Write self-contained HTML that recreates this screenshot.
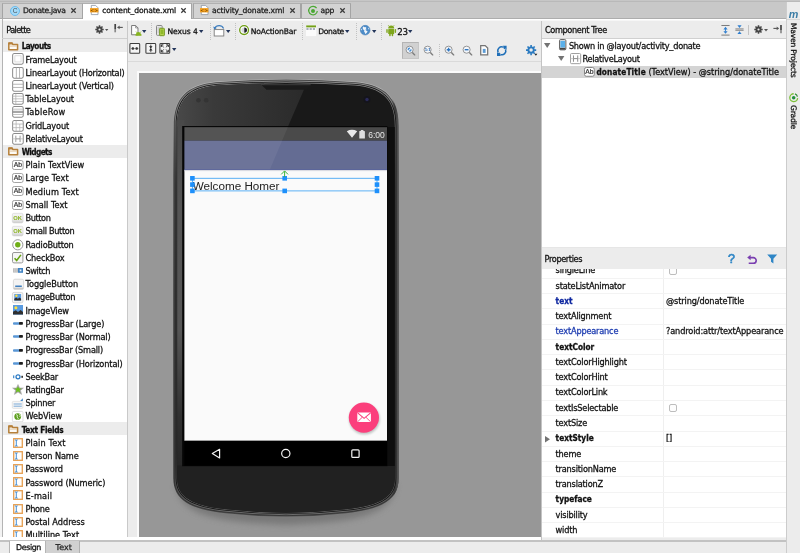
<!DOCTYPE html>
<html><head><meta charset="utf-8"><title>content_donate.xml</title>
<style>
*{margin:0;padding:0;box-sizing:border-box}
html,body{width:800px;height:553px;overflow:hidden;background:#ececec;font-family:"DejaVu Sans","Liberation Sans",sans-serif;font-size:7.8px;color:#1a1a1a}
.a{position:absolute}
.t{position:absolute;white-space:nowrap;line-height:10px;height:10px;margin-top:0.1px;-webkit-text-stroke:0.27px currentColor}
#root{position:absolute;left:0;top:0;width:800px;height:553px;overflow:hidden;will-change:transform}
.b,b{font-weight:bold;font-family:"DejaVu Sans Condensed","DejaVu Sans",sans-serif}
svg{position:absolute;overflow:visible}
</style></head>
<body>
<div id="root">
<div class="a" style="left:0px;top:0px;width:800px;height:19px;background:#c8c8c8;"></div>
<div class="a" style="left:0px;top:0px;width:800px;height:2.4px;background:#b9b9b9;"></div>
<div class="a" style="left:0px;top:0px;width:800px;height:0.8px;background:#c6c6c6;"></div>
<div class="a" style="left:0px;top:17.8px;width:800px;height:1px;background:#adadad;"></div>
<div class="a" style="left:0px;top:18.7px;width:800px;height:1.7px;background:#ffffff;"></div>
<div class="a" style="left:0px;top:20.4px;width:800px;height:1px;background:#f6f6f6;"></div>
<div class="a" style="left:2px;top:2.6px;width:80.5px;height:15.4px;background:#d3d3d3;border-left:1px solid #a4a4a4;border-right:1px solid #a4a4a4;border-top:0.6px solid #b0b0b0;"></div>
<div class="a" style="left:81.8px;top:2.6px;width:110.2px;height:16.4px;background:#ffffff;border-left:1px solid #a4a4a4;border-right:1px solid #a4a4a4;border-top:0.6px solid #b0b0b0;"></div>
<div class="a" style="left:192.5px;top:2.6px;width:108.19999999999999px;height:15.4px;background:#d3d3d3;border-left:1px solid #a4a4a4;border-right:1px solid #a4a4a4;border-top:0.6px solid #b0b0b0;"></div>
<div class="a" style="left:301px;top:2.6px;width:49.80000000000001px;height:15.4px;background:#d3d3d3;border-left:1px solid #a4a4a4;border-right:1px solid #a4a4a4;border-top:0.6px solid #b0b0b0;"></div>
<div class="t " style="left:23px;top:5.80px;font-size:7.6px;letter-spacing:-0.3px;color:#222;">Donate.java</div>
<div class="t " style="left:102.2px;top:5.80px;font-size:7.6px;letter-spacing:-0.11px;color:#111;">content_donate.xml</div>
<div class="t " style="left:212px;top:5.80px;font-size:7.6px;letter-spacing:-0.14px;color:#222;">activity_donate.xml</div>
<div class="t " style="left:320.5px;top:5.80px;font-size:7.6px;letter-spacing:-0.27px;color:#222;">app</div>
<svg style="left:71.0px;top:8.3px" width="5" height="5" viewBox="0 0 5 5"><path d="M0.3 0.3L4.7 4.7M4.7 0.3L0.3 4.7" stroke="#3a3a3a" stroke-width="1.25" fill="none"/></svg>
<svg style="left:181.3px;top:8.3px" width="5" height="5" viewBox="0 0 5 5"><path d="M0.3 0.3L4.7 4.7M4.7 0.3L0.3 4.7" stroke="#3a3a3a" stroke-width="1.25" fill="none"/></svg>
<svg style="left:290.0px;top:8.3px" width="5" height="5" viewBox="0 0 5 5"><path d="M0.3 0.3L4.7 4.7M4.7 0.3L0.3 4.7" stroke="#3a3a3a" stroke-width="1.25" fill="none"/></svg>
<svg style="left:339.5px;top:8.3px" width="5" height="5" viewBox="0 0 5 5"><path d="M0.3 0.3L4.7 4.7M4.7 0.3L0.3 4.7" stroke="#3a3a3a" stroke-width="1.25" fill="none"/></svg>
<svg style="left:10.1px;top:5.5px" width="10" height="10" viewBox="0 0 10 10"><circle cx="5" cy="5" r="4.5" fill="#a3daf8" stroke="#62b8ec" stroke-width="0.9"/><text x="5.05" y="7.35" font-size="6.6" text-anchor="middle" fill="#4c5258" font-family='"Liberation Sans",sans-serif'>C</text></svg>
<svg style="left:90.2px;top:5.2px" width="9" height="10" viewBox="0 0 9 10"><path d="M1.3 0.4H5.6L8 2.8V9.6H1.3Z" fill="#fff" stroke="#8a93a0" stroke-width="0.8"/><rect x="0" y="3.1" width="8.4" height="4.3" fill="#f5a01e"/><text x="4.2" y="6.8" font-size="4.6" text-anchor="middle" fill="#7a4a00" font-weight="bold" font-family='"DejaVu Sans",sans-serif'>&lt;&gt;</text></svg>
<svg style="left:200.3px;top:5.2px" width="9" height="10" viewBox="0 0 9 10"><path d="M1.3 0.4H5.6L8 2.8V9.6H1.3Z" fill="#fff" stroke="#8a93a0" stroke-width="0.8"/><rect x="0" y="3.1" width="8.4" height="4.3" fill="#f5a01e"/><text x="4.2" y="6.8" font-size="4.6" text-anchor="middle" fill="#7a4a00" font-weight="bold" font-family='"DejaVu Sans",sans-serif'>&lt;&gt;</text></svg>
<svg style="left:307.6px;top:5.7px" width="10" height="10" viewBox="0 0 10 10"><path d="M8.6 2.2A4.3 4.3 0 1 0 9.3 5" fill="none" stroke="#4aa832" stroke-width="1.2"/><circle cx="5" cy="5" r="2" fill="#4aa832"/></svg>
<div class="a" style="left:0px;top:21.3px;width:128px;height:520px;background:#ececec;"></div>
<div class="a" style="left:82.8px;top:17px;width:108.4px;height:2px;background:#ffffff;"></div>
<div class="a" style="left:2.4px;top:38.6px;width:124.4px;height:499px;background:#ffffff;"></div>
<div class="a" style="left:0px;top:20.4px;width:2px;height:533px;background:#f3f3f3;"></div>
<div class="a" style="left:1.9px;top:19px;width:0.8px;height:534px;background:#b4b4b4;"></div>
<div class="a" style="left:2.4px;top:38.2px;width:125px;height:0.7px;background:#cfcfcf;"></div>
<div class="a" style="left:127px;top:21.3px;width:0.9px;height:517px;background:#c9c9c9;"></div>
<div class="t " style="left:6.2px;top:25.40px;font-size:8.2px;letter-spacing:-0.62px;color:#111;">Palette</div>
<svg style="left:94.8px;top:24.5px" width="9" height="9" viewBox="0 0 9 9"><circle cx="4.5" cy="4.5" r="2.05" fill="none" stroke="#454545" stroke-width="1.9"/><g stroke="#454545" stroke-width="1.55"><path d="M4.5 0.3V2M4.5 7V8.7M0.3 4.5H2M7 4.5H8.7M1.5 1.5L2.7 2.7M6.3 6.3L7.5 7.5M7.5 1.5L6.3 2.7M2.7 6.3L1.5 7.5"/></g></svg>
<svg style="left:104.8px;top:28.5px" width="3.4" height="2.6" viewBox="0 0 4 3"><path d="M0 0H4L2 2.4Z" fill="#555"/></svg>
<svg style="left:113.6px;top:24.4px" width="10" height="9" viewBox="0 0 10 9"><path d="M1.2 0V5" stroke="#444" stroke-width="1.7"/><path d="M1.2 5V8.3" stroke="#8a8a8a" stroke-width="1.7"/><path d="M3.6 3.4H8.8" stroke="#555" stroke-width="1.1"/><path d="M3.3 3.4L5.6 1.6V5.2Z" fill="#555"/></svg>
<div class="a" style="left:0;top:38.6px;width:127px;height:498.6px;overflow:hidden">
<div class="a" style="left:0;top:-38.6px;width:127px;height:560px">
<div class="a" style="left:2.8px;top:39.1px;width:124.2px;height:13.0px;background:#ececec;"></div>
<svg style="left:8.1px;top:41.70px" width="10.2" height="8.6" viewBox="0 0 10 8.4"><path d="M0.8 0.9V7.6H9.4V2.4H4.7L4 0.9Z" fill="#fdfaf5" stroke="#b6803a" stroke-width="1.5" stroke-linejoin="round"/><path d="M0.6 0.5H4L4.8 2.4H0.6Z" fill="#b6803a"/><path d="M1.6 4H8.6" stroke="#d9b98c" stroke-width="0.8"/></svg>
<div class="t b" style="left:21.7px;top:41.20px;font-size:8.2px;letter-spacing:-0.51px;color:#111;">Layouts</div>
<svg style="left:12.1px;top:53.42px" width="11.9" height="11.7" viewBox="0 0 11 11"><rect x="0.5" y="0.5" width="10" height="10" rx="1.5" fill="#fff" stroke="#8c8c8c" stroke-width="0.95"/><rect x="2.6" y="2.6" width="5.8" height="5.8" fill="none" stroke="#d8d8d8" stroke-width="0.8"/></svg>
<div class="t " style="left:25.5px;top:54.42px;font-size:8.2px;letter-spacing:-0.213px;color:#111;">FrameLayout</div>
<svg style="left:12.1px;top:66.64px" width="11.9" height="11.7" viewBox="0 0 11 11"><rect x="0.5" y="0.5" width="10" height="10" rx="1.5" fill="#fff" stroke="#8c8c8c" stroke-width="0.95"/><path d="M4 0.5V10.5M7 0.5V10.5" stroke="#aaa" stroke-width="0.8"/></svg>
<div class="t " style="left:25.5px;top:67.64px;font-size:8.2px;letter-spacing:-0.203px;color:#111;">LinearLayout (Horizontal)</div>
<svg style="left:12.1px;top:79.86px" width="11.9" height="11.7" viewBox="0 0 11 11"><rect x="0.5" y="0.5" width="10" height="10" rx="1.5" fill="#fff" stroke="#8c8c8c" stroke-width="0.95"/><path d="M0.5 4H10.5M0.5 7H10.5" stroke="#aaa" stroke-width="0.8"/></svg>
<div class="t " style="left:25.5px;top:80.86px;font-size:8.2px;letter-spacing:-0.205px;color:#111;">LinearLayout (Vertical)</div>
<svg style="left:12.1px;top:93.08px" width="11.9" height="11.7" viewBox="0 0 11 11"><rect x="0.5" y="0.5" width="10" height="10" rx="1.5" fill="#fff" stroke="#8c8c8c" stroke-width="0.95"/><path d="M0.5 3H10.5M0.5 5.5H10.5M0.5 8H10.5M3.5 0.5V10.5" stroke="#b0b0b0" stroke-width="0.7"/></svg>
<div class="t " style="left:25.5px;top:94.08px;font-size:8.2px;letter-spacing:-0.047px;color:#111;">TableLayout</div>
<svg style="left:12.1px;top:106.30px" width="11.9" height="11.7" viewBox="0 0 11 11"><rect x="0.5" y="0.5" width="10" height="10" rx="1.5" fill="#fff" stroke="#8c8c8c" stroke-width="0.95"/><path d="M0.5 3H10.5M0.5 8H10.5" stroke="#b0b0b0" stroke-width="0.7"/><path d="M0.5 5H10.5M0.5 6H10.5" stroke="#888" stroke-width="0.8"/></svg>
<div class="t " style="left:25.5px;top:107.30px;font-size:8.2px;letter-spacing:0.225px;color:#111;">TableRow</div>
<svg style="left:12.1px;top:119.52px" width="11.9" height="11.7" viewBox="0 0 11 11"><rect x="0.5" y="0.5" width="10" height="10" rx="1.5" fill="#fff" stroke="#8c8c8c" stroke-width="0.95"/><path d="M0.5 3.8H10.5M0.5 7.2H10.5M3.8 0.5V10.5M7.2 3.8V10.5" stroke="#b0b0b0" stroke-width="0.7"/></svg>
<div class="t " style="left:25.5px;top:120.52px;font-size:8.2px;letter-spacing:-0.152px;color:#111;">GridLayout</div>
<svg style="left:12.1px;top:132.74px" width="11.9" height="11.7" viewBox="0 0 11 11"><rect x="0.5" y="0.5" width="10" height="10" rx="1.5" fill="#fff" stroke="#8c8c8c" stroke-width="0.95"/><path d="M3.5 2.5V8.5M7.5 2.5V8.5M3.5 5.5H7.5" stroke="#888" stroke-width="0.8" fill="none"/><path d="M0.5 5.5H3.5M7.5 5.5H10.5" stroke="#bbb" stroke-width="0.7"/></svg>
<div class="t " style="left:25.5px;top:133.74px;font-size:8.2px;letter-spacing:-0.261px;color:#111;">RelativeLayout</div>
<div class="a" style="left:2.8px;top:144.85999999999999px;width:124.2px;height:13.0px;background:#ececec;"></div>
<svg style="left:8.1px;top:147.46px" width="10.2" height="8.6" viewBox="0 0 10 8.4"><path d="M0.8 0.9V7.6H9.4V2.4H4.7L4 0.9Z" fill="#fdfaf5" stroke="#b6803a" stroke-width="1.5" stroke-linejoin="round"/><path d="M0.6 0.5H4L4.8 2.4H0.6Z" fill="#b6803a"/><path d="M1.6 4H8.6" stroke="#d9b98c" stroke-width="0.8"/></svg>
<div class="t b" style="left:21.7px;top:146.96px;font-size:8.2px;letter-spacing:-0.56px;color:#111;">Widgets</div>
<svg style="left:12.3px;top:159.98px" width="11.6" height="10" viewBox="0 0 11.6 10"><rect x="0.5" y="0.5" width="10.6" height="9" rx="1.8" fill="#fff" stroke="#999" stroke-width="0.9"/><text x="5.8" y="7.2" font-size="6.8" stroke="#333" stroke-width="0.2" text-anchor="middle" fill="#333" font-family='"Liberation Sans",sans-serif'>Ab</text></svg>
<div class="t " style="left:25.5px;top:160.18px;font-size:8.2px;letter-spacing:0.036px;color:#111;">Plain TextView</div>
<svg style="left:12.3px;top:173.20px" width="11.6" height="10" viewBox="0 0 11.6 10"><rect x="0.5" y="0.5" width="10.6" height="9" rx="1.8" fill="#fff" stroke="#999" stroke-width="0.9"/><text x="5.8" y="7.2" font-size="6.8" stroke="#333" stroke-width="0.2" text-anchor="middle" fill="#333" font-family='"Liberation Sans",sans-serif'>Ab</text></svg>
<div class="t " style="left:25.5px;top:173.40px;font-size:8.2px;letter-spacing:0.11px;color:#111;">Large Text</div>
<svg style="left:12.3px;top:186.42px" width="11.6" height="10" viewBox="0 0 11.6 10"><rect x="0.5" y="0.5" width="10.6" height="9" rx="1.8" fill="#fff" stroke="#999" stroke-width="0.9"/><text x="5.8" y="7.2" font-size="6.8" stroke="#333" stroke-width="0.2" text-anchor="middle" fill="#333" font-family='"Liberation Sans",sans-serif'>Ab</text></svg>
<div class="t " style="left:25.5px;top:186.62px;font-size:8.2px;letter-spacing:0.127px;color:#111;">Medium Text</div>
<svg style="left:12.3px;top:199.64px" width="11.6" height="10" viewBox="0 0 11.6 10"><rect x="0.5" y="0.5" width="10.6" height="9" rx="1.8" fill="#fff" stroke="#999" stroke-width="0.9"/><text x="5.8" y="7.2" font-size="6.8" stroke="#333" stroke-width="0.2" text-anchor="middle" fill="#333" font-family='"Liberation Sans",sans-serif'>Ab</text></svg>
<div class="t " style="left:25.5px;top:199.84px;font-size:8.2px;letter-spacing:0.019px;color:#111;">Small Text</div>
<svg style="left:12.2px;top:212.96px" width="11.4" height="10.4" viewBox="0 0 11.4 10.4"><defs><linearGradient id="okg217" x1="0" y1="0" x2="0" y2="1"><stop offset="0" stop-color="#f6f6f6"/><stop offset="0.7" stop-color="#e6e6e6"/><stop offset="1" stop-color="#cdcdcd"/></linearGradient></defs><rect x="0.3" y="0.3" width="10.8" height="9.6" rx="1.6" fill="url(#okg217)" stroke="#d0d0d0" stroke-width="0.6"/><text x="5.7" y="7.1" font-size="5.8" text-anchor="middle" fill="#8cb523" font-weight="bold" font-family='"Liberation Sans",sans-serif'>OK</text></svg>
<div class="t " style="left:25.5px;top:213.06px;font-size:8.2px;letter-spacing:-0.406px;color:#111;">Button</div>
<svg style="left:12.2px;top:226.18px" width="11.4" height="10.4" viewBox="0 0 11.4 10.4"><defs><linearGradient id="okg231" x1="0" y1="0" x2="0" y2="1"><stop offset="0" stop-color="#f6f6f6"/><stop offset="0.7" stop-color="#e6e6e6"/><stop offset="1" stop-color="#cdcdcd"/></linearGradient></defs><rect x="0.3" y="0.3" width="10.8" height="9.6" rx="1.6" fill="url(#okg231)" stroke="#d0d0d0" stroke-width="0.6"/><text x="5.7" y="7.1" font-size="5.8" text-anchor="middle" fill="#8cb523" font-weight="bold" font-family='"Liberation Sans",sans-serif'>OK</text></svg>
<div class="t " style="left:25.5px;top:226.28px;font-size:8.2px;letter-spacing:-0.323px;color:#111;">Small Button</div>
<svg style="left:12.2px;top:238.50px" width="11.6" height="11.6" viewBox="0 0 11.6 11.6"><circle cx="5.8" cy="5.8" r="5.1" fill="#fdfdfd" stroke="#979797" stroke-width="1"/><circle cx="5.8" cy="5.8" r="2.7" fill="#6fae16"/></svg>
<div class="t " style="left:25.5px;top:239.50px;font-size:8.2px;letter-spacing:-0.212px;color:#111;">RadioButton</div>
<svg style="left:12.2px;top:251.82px" width="11.4" height="11.4" viewBox="0 0 11.4 11.4"><rect x="0.5" y="0.5" width="10.4" height="10.4" rx="1.5" fill="#f6f6f6" stroke="#979797" stroke-width="1"/><path d="M2.6 6.2L4.7 8.6L8.9 2.9" fill="none" stroke="#65a312" stroke-width="1.6"/></svg>
<div class="t " style="left:25.5px;top:252.72px;font-size:8.2px;letter-spacing:-0.188px;color:#111;">CheckBox</div>
<svg style="left:13px;top:267.94px" width="10" height="5" viewBox="0 0 10 5"><rect x="0" y="0.2" width="5" height="4.4" fill="#bdbdbd"/><path d="M1.6 0.2V4.6M3.2 0.2V4.6" stroke="#d9d9d9" stroke-width="0.6"/><rect x="5" y="0" width="5" height="4.8" fill="#3f83c4"/><rect x="6.7" y="1.5" width="1.7" height="1.8" fill="#e8f1fa"/></svg>
<div class="t " style="left:25.5px;top:265.94px;font-size:8.2px;letter-spacing:-0.413px;color:#111;">Switch</div>
<svg style="left:12.6px;top:278.76px" width="11" height="11" viewBox="0 0 11 11"><rect x="0.4" y="0.2" width="10.2" height="10.2" rx="1.5" fill="#f3f3f3" stroke="#cdcdcd" stroke-width="0.7"/><rect x="0.8" y="8.6" width="9.4" height="1.7" fill="#c6c6c6"/><rect x="2.2" y="6.5" width="6.6" height="1.5" fill="#3f7fbf"/></svg>
<div class="t " style="left:25.5px;top:279.16px;font-size:8.2px;letter-spacing:-0.104px;color:#111;">ToggleButton</div>
<svg style="left:12.4px;top:291.58px" width="11.4" height="11.4" viewBox="0 0 11.4 11.4"><rect x="0.4" y="0.4" width="10.6" height="10.4" rx="1.6" fill="#f4f4f4" stroke="#c8c8c8" stroke-width="0.7"/><rect x="2.3" y="2" width="6.8" height="6.6" fill="#5a9be0"/><circle cx="4.4" cy="3.8" r="1.2" fill="#ffe23a"/><path d="M2.3 8.6V6.8L4.3 5.6L5.8 6.8L7.6 5.4L9.1 6.8V8.6Z" fill="#2e2e2e"/></svg>
<div class="t " style="left:25.5px;top:292.38px;font-size:8.2px;letter-spacing:-0.307px;color:#111;">ImageButton</div>
<svg style="left:13px;top:305.40px" width="10" height="10" viewBox="0 0 10 10"><rect x="0" y="0" width="10" height="9.6" fill="#5a9be0"/><circle cx="2.9" cy="2.8" r="1.5" fill="#ffe23a"/><path d="M0 9.6V6.8L2.8 5.2L5 6.9L7.6 4.9L10 7V9.6Z" fill="#303030"/></svg>
<div class="t " style="left:25.5px;top:305.60px;font-size:8.2px;letter-spacing:-0.198px;color:#111;">ImageView</div>
<svg style="left:13px;top:322.12px" width="10" height="3" viewBox="0 0 10 3"><rect x="0" y="0.2" width="6.8" height="2.5" rx="0.9" fill="#5a97d6"/><rect x="6" y="0.1" width="3.9" height="2.7" rx="0.7" fill="#1e1e1e"/></svg>
<div class="t " style="left:25.5px;top:318.82px;font-size:8.2px;letter-spacing:-0.119px;color:#111;">ProgressBar (Large)</div>
<svg style="left:13px;top:335.34px" width="10" height="3" viewBox="0 0 10 3"><rect x="0" y="0.2" width="6.8" height="2.5" rx="0.9" fill="#5a97d6"/><rect x="6" y="0.1" width="3.9" height="2.7" rx="0.7" fill="#1e1e1e"/></svg>
<div class="t " style="left:25.5px;top:332.04px;font-size:8.2px;letter-spacing:-0.123px;color:#111;">ProgressBar (Normal)</div>
<svg style="left:13px;top:348.56px" width="10" height="3" viewBox="0 0 10 3"><rect x="0" y="0.2" width="6.8" height="2.5" rx="0.9" fill="#5a97d6"/><rect x="6" y="0.1" width="3.9" height="2.7" rx="0.7" fill="#1e1e1e"/></svg>
<div class="t " style="left:25.5px;top:345.26px;font-size:8.2px;letter-spacing:-0.167px;color:#111;">ProgressBar (Small)</div>
<svg style="left:13px;top:361.78px" width="10" height="3" viewBox="0 0 10 3"><rect x="0" y="0.2" width="6.8" height="2.5" rx="0.9" fill="#5a97d6"/><rect x="6" y="0.1" width="3.9" height="2.7" rx="0.7" fill="#1e1e1e"/></svg>
<div class="t " style="left:25.5px;top:358.48px;font-size:8.2px;letter-spacing:-0.11px;color:#111;">ProgressBar (Horizontal)</div>
<svg style="left:13px;top:373.70px" width="10" height="6" viewBox="0 0 10 6"><rect x="0" y="1.4" width="1.3" height="2.8" fill="#4a90d0"/><circle cx="5" cy="2.8" r="2" fill="#fff" stroke="#2f7cc4" stroke-width="1.3"/><rect x="8.4" y="1.8" width="1.5" height="2" fill="#222"/></svg>
<div class="t " style="left:25.5px;top:371.70px;font-size:8.2px;letter-spacing:-0.245px;color:#111;">SeekBar</div>
<svg style="left:12.2px;top:383.92px" width="12" height="11.4" viewBox="0 0 12 11.4"><path d="M6 0.5L7.6 4H11.4L8.5 6.4L9.6 10.4L6 8.1L2.4 10.4L3.5 6.4L0.6 4H4.4Z" fill="#9c9c9c" stroke="#adadad" stroke-width="0.6"/><path d="M6 2.2L7.05 4.6H9.5L7.6 6.2L8.3 8.7L6 7.2L3.7 8.7L4.4 6.2L2.5 4.6H4.95Z" fill="#6cc21c"/></svg>
<div class="t " style="left:25.5px;top:384.92px;font-size:8.2px;letter-spacing:-0.256px;color:#111;">RatingBar</div>
<svg style="left:12.4px;top:397.54px" width="11.4" height="11" viewBox="0 0 11.4 11"><rect x="0.3" y="3.4" width="10.6" height="7" rx="1" fill="#f6f6f6" stroke="#d5d5d5" stroke-width="0.6"/><path d="M1.6 6H9.8M1.6 8.2H9.8" stroke="#5a96cf" stroke-width="0.8"/><path d="M10.8 0.3V2.9H8.2Z" fill="#3f83c4"/></svg>
<div class="t " style="left:25.5px;top:398.14px;font-size:8.2px;letter-spacing:-0.265px;color:#111;">Spinner</div>
<svg style="left:12.4px;top:410.56px" width="11.4" height="11.4" viewBox="0 0 11.4 11.4"><rect x="0.4" y="0.4" width="10.6" height="10.4" rx="1.2" fill="#fff" stroke="#cfcfcf" stroke-width="0.7"/><circle cx="5.7" cy="5.6" r="3.4" fill="#5f9f22"/><path d="M4 3.6L5.6 4.4L5 6L6.2 7.4L5.8 8.6M7.4 3.2L8.4 4.8L7.6 6" stroke="#e9f4d8" stroke-width="0.9" fill="none"/></svg>
<div class="t " style="left:25.5px;top:411.36px;font-size:8.2px;letter-spacing:-0.097px;color:#111;">WebView</div>
<div class="a" style="left:2.8px;top:422.48px;width:124.2px;height:13.0px;background:#ececec;"></div>
<svg style="left:8.1px;top:425.08px" width="10.2" height="8.6" viewBox="0 0 10 8.4"><path d="M0.8 0.9V7.6H9.4V2.4H4.7L4 0.9Z" fill="#fdfaf5" stroke="#b6803a" stroke-width="1.5" stroke-linejoin="round"/><path d="M0.6 0.5H4L4.8 2.4H0.6Z" fill="#b6803a"/><path d="M1.6 4H8.6" stroke="#d9b98c" stroke-width="0.8"/></svg>
<div class="t b" style="left:21.7px;top:424.58px;font-size:8.2px;letter-spacing:-0.26px;color:#111;">Text Fields</div>
<svg style="left:13px;top:437.60px" width="10" height="10" viewBox="0 0 10 10"><rect x="0.7" y="0.7" width="8.6" height="8.6" fill="#fff" stroke="#e6a155" stroke-width="1.35"/><path d="M1.9 1.8Q3.1 1.9 3.3 3V7Q3.1 8.1 1.9 8.2M4.7 1.8Q3.5 1.9 3.3 3M3.3 7Q3.5 8.1 4.7 8.2" fill="none" stroke="#4f95d8" stroke-width="1.05"/></svg>
<div class="t " style="left:25.5px;top:437.80px;font-size:8.2px;letter-spacing:0.124px;color:#111;">Plain Text</div>
<svg style="left:13px;top:450.82px" width="10" height="10" viewBox="0 0 10 10"><rect x="0.7" y="0.7" width="8.6" height="8.6" fill="#fff" stroke="#e6a155" stroke-width="1.35"/><path d="M1.9 1.8Q3.1 1.9 3.3 3V7Q3.1 8.1 1.9 8.2M4.7 1.8Q3.5 1.9 3.3 3M3.3 7Q3.5 8.1 4.7 8.2" fill="none" stroke="#4f95d8" stroke-width="1.05"/></svg>
<div class="t " style="left:25.5px;top:451.02px;font-size:8.2px;letter-spacing:-0.098px;color:#111;">Person Name</div>
<svg style="left:13px;top:464.04px" width="10" height="10" viewBox="0 0 10 10"><rect x="0.7" y="0.7" width="8.6" height="8.6" fill="#fff" stroke="#e6a155" stroke-width="1.35"/><path d="M1.9 1.8Q3.1 1.9 3.3 3V7Q3.1 8.1 1.9 8.2M4.7 1.8Q3.5 1.9 3.3 3M3.3 7Q3.5 8.1 4.7 8.2" fill="none" stroke="#4f95d8" stroke-width="1.05"/></svg>
<div class="t " style="left:25.5px;top:464.24px;font-size:8.2px;letter-spacing:-0.106px;color:#111;">Password</div>
<svg style="left:13px;top:477.26px" width="10" height="10" viewBox="0 0 10 10"><rect x="0.7" y="0.7" width="8.6" height="8.6" fill="#fff" stroke="#e6a155" stroke-width="1.35"/><path d="M1.9 1.8Q3.1 1.9 3.3 3V7Q3.1 8.1 1.9 8.2M4.7 1.8Q3.5 1.9 3.3 3M3.3 7Q3.5 8.1 4.7 8.2" fill="none" stroke="#4f95d8" stroke-width="1.05"/></svg>
<div class="t " style="left:25.5px;top:477.46px;font-size:8.2px;letter-spacing:-0.106px;color:#111;">Password (Numeric)</div>
<svg style="left:13px;top:490.48px" width="10" height="10" viewBox="0 0 10 10"><rect x="0.7" y="0.7" width="8.6" height="8.6" fill="#fff" stroke="#e6a155" stroke-width="1.35"/><path d="M1.9 1.8Q3.1 1.9 3.3 3V7Q3.1 8.1 1.9 8.2M4.7 1.8Q3.5 1.9 3.3 3M3.3 7Q3.5 8.1 4.7 8.2" fill="none" stroke="#4f95d8" stroke-width="1.05"/></svg>
<div class="t " style="left:25.5px;top:490.68px;font-size:8.2px;letter-spacing:0.155px;color:#111;">E-mail</div>
<svg style="left:13px;top:503.70px" width="10" height="10" viewBox="0 0 10 10"><rect x="0.7" y="0.7" width="8.6" height="8.6" fill="#fff" stroke="#e6a155" stroke-width="1.35"/><path d="M1.9 1.8Q3.1 1.9 3.3 3V7Q3.1 8.1 1.9 8.2M4.7 1.8Q3.5 1.9 3.3 3M3.3 7Q3.5 8.1 4.7 8.2" fill="none" stroke="#4f95d8" stroke-width="1.05"/></svg>
<div class="t " style="left:25.5px;top:503.90px;font-size:8.2px;letter-spacing:-0.295px;color:#111;">Phone</div>
<svg style="left:13px;top:516.92px" width="10" height="10" viewBox="0 0 10 10"><rect x="0.7" y="0.7" width="8.6" height="8.6" fill="#fff" stroke="#e6a155" stroke-width="1.35"/><path d="M1.9 1.8Q3.1 1.9 3.3 3V7Q3.1 8.1 1.9 8.2M4.7 1.8Q3.5 1.9 3.3 3M3.3 7Q3.5 8.1 4.7 8.2" fill="none" stroke="#4f95d8" stroke-width="1.05"/></svg>
<div class="t " style="left:25.5px;top:517.12px;font-size:8.2px;letter-spacing:-0.024px;color:#111;">Postal Address</div>
<svg style="left:13px;top:530.14px" width="10" height="10" viewBox="0 0 10 10"><rect x="0.7" y="0.7" width="8.6" height="8.6" fill="#fff" stroke="#e6a155" stroke-width="1.35"/><path d="M1.9 1.8Q3.1 1.9 3.3 3V7Q3.1 8.1 1.9 8.2M4.7 1.8Q3.5 1.9 3.3 3M3.3 7Q3.5 8.1 4.7 8.2" fill="none" stroke="#4f95d8" stroke-width="1.05"/></svg>
<div class="t " style="left:25.5px;top:530.34px;font-size:8.2px;letter-spacing:-0.025px;color:#111;">Multiline Text</div>
</div></div>
<div class="a" style="left:128px;top:21.3px;width:413px;height:40.2px;background:#ececec;"></div>
<div class="a" style="left:128px;top:61.2px;width:413px;height:0.8px;background:#dadada;"></div>
<div class="a" style="left:151.2px;top:23.3px;width:1px;height:16.499999999999996px;background:repeating-linear-gradient(to bottom,#c2c2c2 0,#c2c2c2 1px,transparent 1px,transparent 2px)"></div>
<div class="a" style="left:209.7px;top:23.3px;width:1px;height:16.499999999999996px;background:repeating-linear-gradient(to bottom,#c2c2c2 0,#c2c2c2 1px,transparent 1px,transparent 2px)"></div>
<div class="a" style="left:234.75px;top:23.3px;width:1px;height:16.499999999999996px;background:repeating-linear-gradient(to bottom,#c2c2c2 0,#c2c2c2 1px,transparent 1px,transparent 2px)"></div>
<div class="a" style="left:302.25px;top:23.3px;width:1px;height:16.499999999999996px;background:repeating-linear-gradient(to bottom,#c2c2c2 0,#c2c2c2 1px,transparent 1px,transparent 2px)"></div>
<div class="a" style="left:356.0px;top:23.3px;width:1px;height:16.499999999999996px;background:repeating-linear-gradient(to bottom,#c2c2c2 0,#c2c2c2 1px,transparent 1px,transparent 2px)"></div>
<div class="a" style="left:381.2px;top:23.3px;width:1px;height:16.499999999999996px;background:repeating-linear-gradient(to bottom,#c2c2c2 0,#c2c2c2 1px,transparent 1px,transparent 2px)"></div>
<svg style="left:131.2px;top:25.3px" width="10.4" height="10.8" viewBox="0 0 10.4 10.8"><path d="M0.6 0.5H4.6L7 2.9V9.8H0.6Z" fill="#fdfdfd" stroke="#747474" stroke-width="0.95"/><path d="M4.6 0.5V2.9H7" fill="none" stroke="#747474" stroke-width="0.7"/><path d="M5 10.6V9.4A2.5 2.5 0 0 1 10 9.4V10.6Z" fill="#86b41f"/><path d="M5.7 7.6L5 6.6M9.3 7.6L10 6.6" stroke="#86b41f" stroke-width="0.8"/><rect x="4.4" y="9.4" width="6.2" height="1.2" fill="#86b41f"/></svg>
<svg style="left:142.4px;top:30.400000000000002px" width="4.4" height="3" viewBox="0 0 4.4 3"><path d="M0 0H4.4L2.2 3Z" fill="#23355a"/></svg>
<svg style="left:155.6px;top:24.9px" width="9" height="11.2" viewBox="0 0 9 11.2"><rect x="0.5" y="0.5" width="5.6" height="9.8" rx="0.8" fill="#ededed" stroke="#7a7a7a" stroke-width="0.9"/><rect x="1.5" y="1.8" width="3.4" height="6.6" fill="#cfcfcf"/><rect x="3.6" y="3.3" width="4.8" height="7.4" rx="0.7" fill="#b4d24e" stroke="#6f961c" stroke-width="0.9"/><rect x="4.7" y="4.6" width="2.6" height="4.4" fill="#8fb929"/></svg>
<div class="t " style="left:167.5px;top:27.10px;font-size:7.6px;letter-spacing:-0.06px;color:#111;">Nexus 4</div>
<svg style="left:198.60000000000002px;top:30.400000000000002px" width="4.4" height="3" viewBox="0 0 4.4 3"><path d="M0 0H4.4L2.2 3Z" fill="#23355a"/></svg>
<svg style="left:213.4px;top:24.6px" width="11.6" height="11.6" viewBox="0 0 11.6 11.6"><rect x="1.2" y="4.6" width="9.6" height="6.4" fill="#fff" stroke="#7b7b7b" stroke-width="0.9"/><path d="M1.6 3.4A5 5 0 0 1 10.6 3.4" fill="none" stroke="#3a7bbd" stroke-width="1.15"/><path d="M0.2 1.4L1.2 4.4L3.8 3Z" fill="#3a7bbd"/></svg>
<svg style="left:225.9px;top:30.400000000000002px" width="4.4" height="3" viewBox="0 0 4.4 3"><path d="M0 0H4.4L2.2 3Z" fill="#23355a"/></svg>
<svg style="left:238px;top:24px" width="12.4" height="12.4" viewBox="0 0 12.4 12.4"><circle cx="6.1" cy="6.1" r="5.9" fill="#f7f7f7"/><circle cx="6.1" cy="6.1" r="4.4" fill="#fff" stroke="#6d9c12" stroke-width="1.35"/><circle cx="6.1" cy="6.1" r="2.7" fill="#d9d9de"/><path d="M6.3 3.4A2.7 2.7 0 0 1 6.3 8.8Z" fill="#1f1f2a"/></svg>
<div class="t " style="left:250.7px;top:27.10px;font-size:7.6px;letter-spacing:-0.14px;color:#111;">NoActionBar</div>
<svg style="left:306.4px;top:24.6px" width="10.2" height="11.2" viewBox="0 0 10.4 11.2"><rect x="0" y="0" width="10.4" height="11.2" fill="#fbfbfb"/><rect x="0.2" y="0.3" width="10" height="2" fill="#739f18"/><path d="M0.4 4H10.1" stroke="#5a6480" stroke-width="1.05" stroke-dasharray="2.2 1.1"/></svg>
<div class="t " style="left:318.2px;top:27.10px;font-size:7.6px;letter-spacing:-0.3px;color:#111;">Donate</div>
<svg style="left:345.0px;top:30.400000000000002px" width="4.4" height="3" viewBox="0 0 4.4 3"><path d="M0 0H4.4L2.2 3Z" fill="#23355a"/></svg>
<svg style="left:360.3px;top:25.1px" width="10.4" height="10.4" viewBox="0 0 10.4 10.4"><circle cx="5.2" cy="5.2" r="4.85" fill="#4d8cc8" stroke="#3f7ab2" stroke-width="0.5"/><path d="M3.2 1.6L4.6 2.2L5.4 1.9L6.6 3L5.8 3.6L6.6 4.4L5.4 4.6L6 5.6L7.6 6.2L7 7.4L6 8.6L5.2 9L4.8 7.4L4 6.2L4.4 5.2L3.2 4.4L2.6 3Z" fill="#f0f5fa"/><path d="M1.4 3.4L2.2 4.8L1.6 5.6L0.9 4.8ZM8 2.6L9.2 3.6L9.2 4.8L8.2 4Z" fill="#cfe0f0"/></svg>
<svg style="left:372.3px;top:30.400000000000002px" width="4.4" height="3" viewBox="0 0 4.4 3"><path d="M0 0H4.4L2.2 3Z" fill="#23355a"/></svg>
<svg style="left:385.6px;top:24.6px" width="10.4" height="11.4" viewBox="0 0 10.4 11.4"><path d="M2.2 3.6A3 3 0 0 1 8.2 3.6Z" fill="#7fa61c"/><path d="M3 1.2L2.2 0.2M7.4 1.2L8.2 0.2" stroke="#7fa61c" stroke-width="0.7"/><rect x="2.2" y="4.1" width="6" height="4.9" rx="0.6" fill="#7fa61c"/><rect x="0.3" y="4.1" width="1.4" height="3.8" rx="0.7" fill="#7fa61c"/><rect x="8.7" y="4.1" width="1.4" height="3.8" rx="0.7" fill="#7fa61c"/><rect x="3.2" y="8.6" width="1.5" height="2.6" rx="0.6" fill="#7fa61c"/><rect x="5.7" y="8.6" width="1.5" height="2.6" rx="0.6" fill="#7fa61c"/></svg>
<div class="t " style="left:397.2px;top:27.10px;font-size:8.7px;letter-spacing:-0.25px;color:#111;">23</div>
<svg style="left:407.6px;top:30.400000000000002px" width="4.4" height="3" viewBox="0 0 4.4 3"><path d="M0 0H4.4L2.2 3Z" fill="#23355a"/></svg>
<svg style="left:129.2px;top:43.4px" width="11.6" height="10.8" viewBox="0 0 10.8 10.8"><rect x="0.5" y="0.5" width="9.8" height="9.8" rx="0.9" fill="#f4f4f4" stroke="#3d3d3d" stroke-width="1.05"/><circle cx="3.5" cy="5.6" r="1.25" fill="#222"/><circle cx="7.3" cy="5.6" r="1.25" fill="#222"/><path d="M1.6 5.6H9.2" stroke="#555" stroke-width="0.5"/></svg>
<svg style="left:144.8px;top:43.4px" width="11.6" height="10.8" viewBox="0 0 10.8 10.8"><rect x="0.5" y="0.5" width="9.8" height="9.8" rx="0.9" fill="#f4f4f4" stroke="#3d3d3d" stroke-width="1.05"/><path d="M5.4 1.6V9.2" stroke="#333" stroke-width="0.8"/><path d="M3.6 3.2H7.2L5.4 5.2ZM3.6 7.6H7.2L5.4 5.6Z" fill="#222"/></svg>
<svg style="left:159px;top:43.4px" width="11.6" height="10.8" viewBox="0 0 10.8 10.8"><rect x="0.5" y="0.5" width="9.8" height="9.8" rx="0.9" fill="#f4f4f4" stroke="#3d3d3d" stroke-width="1.05"/><path d="M2.4 2.4L8.4 8.4M8.4 2.4L2.4 8.4" stroke="#333" stroke-width="0.8"/><rect x="4.2" y="4.2" width="2.4" height="2.4" fill="#f2f2f2"/><path d="M1.9 1.9H4M1.9 1.9V4M8.9 1.9H6.8M8.9 1.9V4M1.9 8.9H4M1.9 8.9V6.8M8.9 8.9H6.8M8.9 8.9V6.8" stroke="#222" stroke-width="1"/></svg>
<svg style="left:171.60000000000002px;top:48.199999999999996px" width="4.4" height="3" viewBox="0 0 4.4 3"><path d="M0 0H4.4L2.2 3Z" fill="#23355a"/></svg>
<div class="a" style="left:402.3px;top:42px;width:16.6px;height:16.6px;background:#d1d1d1;border:1px solid #b4b4b4;border-right-color:#c6c6c6;border-bottom-color:#c6c6c6;"></div>
<svg style="left:404.40000000000003px;top:44.4px" width="12" height="12" viewBox="0 0 12 12"><path d="M8.4 8.6L10.7 10.9" stroke="#7c7c7c" stroke-width="1.35" stroke-linecap="round"/><circle cx="5.6" cy="5.7" r="3.55" fill="#f3f6fa" stroke="#858585" stroke-width="0.85"/><path d="M3.5 5.7A2.1 2.1 0 0 1 5.6 3.6L6.3 4.3L4.2 6.4ZM7.7 5.7A2.1 2.1 0 0 1 5.6 7.8L4.9 7.1L7 5Z" fill="#4a90d4"/></svg>
<svg style="left:421.6px;top:44.4px" width="12" height="12" viewBox="0 0 12 12"><path d="M8.4 8.6L10.7 10.9" stroke="#7c7c7c" stroke-width="1.35" stroke-linecap="round"/><circle cx="5.6" cy="5.7" r="3.55" fill="#f3f6fa" stroke="#858585" stroke-width="0.85"/><text x="5.6" y="7.2" font-size="4.3" text-anchor="middle" fill="#2566b0" font-weight="bold" font-family='"Liberation Sans",sans-serif' letter-spacing="-0.1">1:1</text></svg>
<div class="a" style="left:438.5px;top:43.5px;width:1px;height:14.799999999999997px;background:repeating-linear-gradient(to bottom,#c2c2c2 0,#c2c2c2 1px,transparent 1px,transparent 2px)"></div>
<svg style="left:443.40000000000003px;top:44.4px" width="12" height="12" viewBox="0 0 12 12"><path d="M8.4 8.6L10.7 10.9" stroke="#7c7c7c" stroke-width="1.35" stroke-linecap="round"/><circle cx="5.6" cy="5.7" r="3.55" fill="#f3f6fa" stroke="#858585" stroke-width="0.85"/><path d="M5.6 3.8V7.6M3.7 5.7H7.5" stroke="#2f76c0" stroke-width="1.4"/></svg>
<svg style="left:460.6px;top:44.4px" width="12" height="12" viewBox="0 0 12 12"><path d="M8.4 8.6L10.7 10.9" stroke="#7c7c7c" stroke-width="1.35" stroke-linecap="round"/><circle cx="5.6" cy="5.7" r="3.55" fill="#f3f6fa" stroke="#858585" stroke-width="0.85"/><path d="M3.7 5.7H7.5" stroke="#2f76c0" stroke-width="1.4"/></svg>
<svg style="left:480px;top:44.8px" width="8.4" height="10.4" viewBox="0 0 8.4 10.4"><path d="M0.7 0.6H5.2L7.7 3.1V9.8H0.7Z" fill="#fdfdfd" stroke="#747474" stroke-width="1.25"/><rect x="2.8" y="3.9" width="2.8" height="4" fill="#5b9bd5"/></svg>
<svg style="left:496.2px;top:44.7px" width="11.6" height="11.6" viewBox="0 0 11.6 11.6"><path d="M7.2 2.1A3.9 3.9 0 0 0 2.1 7.2" fill="none" stroke="#1f6fb8" stroke-width="1.5"/><path d="M4.4 9.5A3.9 3.9 0 0 0 9.5 4.4" fill="none" stroke="#1f6fb8" stroke-width="1.5"/><path d="M6.6 0.7H10.6V4.7L9.4 3.5L8.6 4.3L7 2.7L7.8 1.9Z" fill="#1f6fb8"/><path d="M5 10.9H1V6.9L2.2 8.1L3 7.3L4.6 8.9L3.8 9.7Z" fill="#1f6fb8"/></svg>
<svg style="left:526.2px;top:45.4px" width="11.4" height="11.4" viewBox="0 0 11.4 11.4"><circle cx="5.1" cy="5.1" r="2.7" fill="none" stroke="#2a7ac0" stroke-width="1.9"/><g stroke="#2a7ac0" stroke-width="1.6"><path d="M5.1 0V2M5.1 8.2V10.2M0 5.1H2M8.2 5.1H10.2M1.5 1.5L2.9 2.9M7.3 7.3L8.7 8.7M8.7 1.5L7.3 2.9M2.9 7.3L1.5 8.7"/></g><path d="M8.4 8.8H11.4L9.9 10.8Z" fill="#222"/></svg>
<div class="a" style="left:137px;top:71px;width:404px;height:469px;background:#fbfbfb;"></div>
<div class="a" style="left:139px;top:73px;width:401.5px;height:463.6px;background:#979797;"></div>
<svg style="left:150px;top:70px" width="280" height="467" viewBox="150 70 280 467">
<defs>
<linearGradient id="rimv" x1="0" y1="79" x2="0" y2="516" gradientUnits="userSpaceOnUse"><stop offset="0" stop-color="#b8b8b8"/><stop offset="0.03" stop-color="#8e8e8e"/><stop offset="0.12" stop-color="#555"/><stop offset="0.5" stop-color="#3c3c3c"/><stop offset="0.9" stop-color="#3a3a3a"/><stop offset="0.97" stop-color="#5a5a5a"/><stop offset="1" stop-color="#6e6e6e"/></linearGradient>
<linearGradient id="rimh" x1="173" y1="0" x2="399" y2="0" gradientUnits="userSpaceOnUse"><stop offset="0" stop-color="#3a3a3a"/><stop offset="0.5" stop-color="#3a3a3a" stop-opacity="0"/><stop offset="0.985" stop-color="#3a3a3a" stop-opacity="0"/><stop offset="1" stop-color="#606060"/></linearGradient>
<linearGradient id="glossh" x1="176" y1="0" x2="300" y2="0" gradientUnits="userSpaceOnUse"><stop offset="0" stop-color="#494949"/><stop offset="0.3" stop-color="#3a3a3a"/><stop offset="1" stop-color="#2b2b2b"/></linearGradient>
<linearGradient id="bezl" x1="0" y1="120" x2="0" y2="470" gradientUnits="userSpaceOnUse"><stop offset="0" stop-color="#494949"/><stop offset="0.25" stop-color="#555"/><stop offset="0.6" stop-color="#565656"/><stop offset="0.85" stop-color="#303030"/><stop offset="1" stop-color="#262626"/></linearGradient>
<clipPath id="inclip"><path d="M177.20 126C177.20 100.92 187.95 88.40 216.78 85.50Q286 80.30 355.22 85.50C384.05 88.40 394.80 100.92 394.80 126L394.80 478C394.80 497.07 380.05 505.50 345.22 509.30Q286 516.10 226.78 509.30C191.95 505.50 177.20 497.07 177.20 478Z"/></clipPath>
<filter id="sblur" x="-20%" y="-200%" width="140%" height="500%"><feGaussianBlur stdDeviation="3.2"/></filter>
<filter id="fblur" x="-30%" y="-30%" width="160%" height="160%"><feGaussianBlur stdDeviation="1.3"/></filter>
</defs>
<!-- drop shadow -->
<path d="M176 484C179 514 210 522 286 525C362 522 393 514 396 484Z" fill="#666" filter="url(#sblur)" opacity="0.62"/>
<!-- outer rim -->
<defs><linearGradient id="g0" x1="0" y1="79" x2="0" y2="517" gradientUnits="userSpaceOnUse"><stop offset="0" stop-color="#b6b6b6"/><stop offset="0.09" stop-color="#969696"/><stop offset="0.22" stop-color="#4a4a4a"/><stop offset="0.5" stop-color="#3a3a3a"/><stop offset="0.9" stop-color="#3a3a3a"/><stop offset="1" stop-color="#4a4a4a"/></linearGradient><linearGradient id="g1" x1="0" y1="79" x2="0" y2="517" gradientUnits="userSpaceOnUse"><stop offset="0" stop-color="#484848"/><stop offset="0.15" stop-color="#3e3e3e"/><stop offset="0.5" stop-color="#3a3a3a"/><stop offset="1" stop-color="#333"/></linearGradient><linearGradient id="g2" x1="0" y1="79" x2="0" y2="517" gradientUnits="userSpaceOnUse"><stop offset="0" stop-color="#8a8a8a"/><stop offset="0.1" stop-color="#747474"/><stop offset="0.24" stop-color="#444"/><stop offset="0.5" stop-color="#3b3b3b"/><stop offset="0.88" stop-color="#3a3a3a"/><stop offset="0.95" stop-color="#555"/><stop offset="1" stop-color="#6e6e6e"/></linearGradient><linearGradient id="g4" x1="0" y1="79" x2="0" y2="517" gradientUnits="userSpaceOnUse"><stop offset="0" stop-color="#8e8e8e"/><stop offset="0.1" stop-color="#747474"/><stop offset="0.25" stop-color="#505050"/><stop offset="0.5" stop-color="#4c4c4c"/><stop offset="0.85" stop-color="#3c3c3c"/><stop offset="0.95" stop-color="#585858"/><stop offset="1" stop-color="#6a6a6a"/></linearGradient><linearGradient id="rimr" x1="392" y1="0" x2="399" y2="0" gradientUnits="userSpaceOnUse"><stop offset="0" stop-color="#2c2c2c" stop-opacity="0"/><stop offset="0.45" stop-color="#383838"/><stop offset="1" stop-color="#5c5c5c"/></linearGradient></defs>
<path d="M173.30 126C173.30 98.00 186.00 84.50 216.00 81.60Q286 76.40 356.00 81.60C386.00 84.50 398.70 98.00 398.70 126L398.70 478C398.70 500.00 382.00 509.40 346.00 513.20Q286 520.00 226.00 513.20C190.00 509.40 173.30 500.00 173.30 478Z" fill="url(#g0)"/>
<path d="M173.90 126C173.90 98.45 186.30 85.10 216.12 82.20Q286 77.00 355.88 82.20C385.70 85.10 398.10 98.45 398.10 126L398.10 478C398.10 499.55 381.70 508.80 345.88 512.60Q286 519.40 226.12 512.60C190.30 508.80 173.90 499.55 173.90 478Z" fill="url(#g1)"/>
<path d="M174.70 126C174.70 99.05 186.70 85.90 216.28 83.00Q286 77.80 355.72 83.00C385.30 85.90 397.30 99.05 397.30 126L397.30 478C397.30 498.95 381.30 508.00 345.72 511.80Q286 518.60 226.28 511.80C190.70 508.00 174.70 498.95 174.70 478Z" fill="url(#g2)"/>
<path d="M173.30 126C173.30 98.00 186.00 84.50 216.00 81.60Q286 76.40 356.00 81.60C386.00 84.50 398.70 98.00 398.70 126L398.70 478C398.70 500.00 382.00 509.40 346.00 513.20Q286 520.00 226.00 513.20C190.00 509.40 173.30 500.00 173.30 478Z" fill="url(#rimr)"/>
<path d="M175.70 126C175.70 99.80 187.20 86.90 216.48 84.00Q286 78.80 355.52 84.00C384.80 86.90 396.30 99.80 396.30 126L396.30 478C396.30 498.20 380.80 507.00 345.52 510.80Q286 517.60 226.48 510.80C191.20 507.00 175.70 498.20 175.70 478Z" fill="#131313"/>
<path d="M176.50 126C176.50 100.40 187.60 87.70 216.64 84.80Q286 79.60 355.36 84.80C384.40 87.70 395.50 100.40 395.50 126L395.50 478C395.50 497.60 380.40 506.20 345.36 510.00Q286 516.80 226.64 510.00C191.60 506.20 176.50 497.60 176.50 478Z" fill="url(#g4)"/>
<!-- body -->
<path d="M177.20 126C177.20 100.92 187.95 88.40 216.78 85.50Q286 80.30 355.22 85.50C384.05 88.40 394.80 100.92 394.80 126L394.80 478C394.80 497.07 380.05 505.50 345.22 509.30Q286 516.10 226.78 509.30C191.95 505.50 177.20 497.07 177.20 478Z" fill="#191919"/>
<g clip-path="url(#inclip)">
<path d="M170 78H262L266.3 89.6H304L288 126.5H170Z" fill="url(#glossh)"/>
<rect x="170" y="120" width="14.3" height="350" fill="url(#bezl)"/>
<rect x="170" y="465.5" width="230" height="55" fill="#212121"/>
<rect x="387" y="127" width="9" height="339" fill="#0e0e0e"/>
</g>
<path d="M260.9 84.6H310.8L307.5 89.4H266.3Z" fill="#1a1a1a"/><path d="M261 84.7H310.7" stroke="#555" stroke-width="0.6"/>
<circle cx="367" cy="99.5" r="3.4" fill="#14141c"/><circle cx="367" cy="99.5" r="1.7" fill="#2a2a58"/>
<circle cx="198.4" cy="100.2" r="2.3" fill="#343434"/><circle cx="206.2" cy="100.2" r="2.3" fill="#343434"/>
<!-- screen -->
<rect x="182.2" y="126" width="205.2" height="340.2" fill="#060606"/>
<rect x="184.4" y="127.2" width="202.6" height="13.5" fill="#4a4a4a"/>
<rect x="184.4" y="140.6" width="202.6" height="29.6" fill="#646c93"/>
<rect x="184.4" y="170.2" width="202.6" height="270.6" fill="#fafafa"/>
<path d="M184.4 126.7H288L269.6 170.2H184.4Z" fill="#fff" opacity="0.06"/>
<rect x="184.4" y="169.4" width="202.6" height="0.9" fill="#5862a0"/>
<rect x="184.4" y="170.2" width="202.6" height="1" fill="#e6e6ea"/>
<rect x="184.4" y="440.8" width="202.6" height="24.8" fill="#000"/>
<!-- status icons -->
<path d="M346.8 131.2Q352 128.4 357.2 131.2L352 137.8Z" fill="#e9e9e9"/>
<rect x="359.3" y="131" width="5.6" height="7.6" rx="0.4" fill="#dedede"/><rect x="360.8" y="130" width="2.6" height="1.4" fill="#dedede"/>
<text x="368.2" y="137.9" font-size="8.5" fill="#e6e6e6" font-family='"Liberation Sans",sans-serif'>6:00</text>
<!-- text + selection -->
<text x="192.7" y="190.2" font-size="11.7" fill="#222" font-family='"Liberation Sans",sans-serif'>Welcome Homer</text>
<rect x="192.4" y="178.3" width="184.6" height="12.6" fill="none" stroke="#4aa8f4" stroke-width="0.9"/>
<g fill="#1e90fb"><rect x="190.1" y="176.0" width="4.6" height="4.6"/><rect x="190.1" y="182.3" width="4.6" height="4.6"/><rect x="190.1" y="188.6" width="4.6" height="4.6"/><rect x="282.4" y="176.0" width="4.6" height="4.6"/><rect x="282.4" y="188.6" width="4.6" height="4.6"/><rect x="374.7" y="176.0" width="4.6" height="4.6"/><rect x="374.7" y="182.3" width="4.6" height="4.6"/><rect x="374.7" y="188.6" width="4.6" height="4.6"/></g>
<path d="M284.6 177V171.2M281.2 174.4L284.6 170.9L288 174.4" fill="none" stroke="#3fb53f" stroke-width="1"/>
<!-- FAB -->
<circle cx="364.4" cy="419.2" r="15.4" fill="#8f9a96" opacity="0.55" filter="url(#fblur)"/>
<circle cx="363.9" cy="417.6" r="15.1" fill="#fb3f7c"/>
<rect x="357.3" y="412.5" width="13.6" height="9.6" rx="0.8" fill="#fff"/><path d="M357.6 412.9L364.1 418.4L370.6 412.9" fill="none" stroke="#fb3f7c" stroke-width="1.1"/><path d="M357.6 421.8L362.3 417.2M370.6 421.8L365.9 417.2" stroke="#fb3f7c" stroke-width="0.9"/>
<!-- nav -->
<path d="M219.6 449.3V457.9L212.3 453.6Z" fill="none" stroke="#f4f4f4" stroke-width="1.2" stroke-linejoin="round"/>
<circle cx="285.8" cy="453.5" r="4.15" fill="none" stroke="#f4f4f4" stroke-width="1.2"/>
<rect x="351.8" y="449.8" width="7.3" height="7.6" rx="1" fill="none" stroke="#f4f4f4" stroke-width="1.2"/>
</svg>

<div class="a" style="left:540.6px;top:21.3px;width:1px;height:518.4px;background:#c4c4c4;"></div>
<div class="a" style="left:541.6px;top:21.3px;width:244.6px;height:17px;background:#ececec;"></div>
<div class="a" style="left:541.6px;top:38.3px;width:244.6px;height:0.7px;background:#d0d0d0;"></div>
<div class="a" style="left:541.6px;top:39px;width:244.6px;height:208.4px;background:#ffffff;"></div>
<div class="a" style="left:541.6px;top:247px;width:244.6px;height:1.2px;background:#e6e6e6;"></div>
<div class="a" style="left:541.6px;top:248px;width:244.6px;height:20.6px;background:#ececec;"></div>
<div class="a" style="left:541.6px;top:268.6px;width:244.6px;height:269.4px;background:#ffffff;"></div>
<div class="a" style="left:786.2px;top:2px;width:13.8px;height:551px;background:#ececec;"></div>
<div class="a" style="left:785.8px;top:2px;width:0.9px;height:551px;background:#cccccc;"></div>
<div class="a" style="left:786.6px;top:19px;width:13.4px;height:0.8px;background:#d8d8d8;"></div>
<div class="t " style="left:544.9px;top:25.40px;font-size:8.2px;letter-spacing:-0.37px;color:#111;">Component Tree</div>
<svg style="left:720.6px;top:24.6px" width="9" height="10.6" viewBox="0 0 9 10.6"><path d="M0.4 0.5H8.6M0.4 10.1H8.6" stroke="#6e6e6e" stroke-width="0.9"/><path d="M4.5 1.8L6.6 4.4H2.4ZM4.5 8.8L6.6 6.2H2.4Z" fill="#2f7fd0"/><path d="M4.5 4V6.6" stroke="#2f7fd0" stroke-width="0.9"/></svg>
<svg style="left:735px;top:24.4px" width="9" height="11" viewBox="0 0 9 11"><path d="M0.4 4.9H8.6M0.4 6.3H8.6" stroke="#6e6e6e" stroke-width="0.8"/><path d="M4.5 4L6.6 1.2H2.4ZM4.5 7.2L6.6 10H2.4Z" fill="#2f7fd0"/></svg>
<div class="a" style="left:748.3px;top:25.4px;width:0.8px;height:9.8px;background:#c3c3c3;"></div>
<svg style="left:753.8px;top:25.1px" width="9" height="9" viewBox="0 0 9 9"><circle cx="4.5" cy="4.5" r="2.05" fill="none" stroke="#454545" stroke-width="1.9"/><g stroke="#454545" stroke-width="1.55"><path d="M4.5 0.3V2M4.5 7V8.7M0.3 4.5H2M7 4.5H8.7M1.5 1.5L2.7 2.7M6.3 6.3L7.5 7.5M7.5 1.5L6.3 2.7M2.7 6.3L1.5 7.5"/></g></svg>
<svg style="left:764px;top:29px" width="4" height="3" viewBox="0 0 4 3"><path d="M0 0H4L2 2.4Z" fill="#555"/></svg>
<svg style="left:773px;top:25.2px" width="9.4" height="9" viewBox="0 0 9.4 9"><path d="M8 0V5" stroke="#444" stroke-width="1.7"/><path d="M8 5V8.3" stroke="#8a8a8a" stroke-width="1.7"/><path d="M0.4 3.4H5.4" stroke="#555" stroke-width="1.1"/><path d="M6 3.4L3.7 1.6V5.2Z" fill="#555"/></svg>
<svg style="left:543.5999999999999px;top:42.7px" width="6.4" height="5" viewBox="0 0 6.4 5"><path d="M0 0H6.4L3.2 5Z" fill="#737373"/></svg>
<svg style="left:558.7px;top:39.3px" width="7.4" height="11.4" viewBox="0 0 7.4 11.4"><rect x="0.5" y="0.5" width="6.4" height="10.4" rx="1.2" fill="#dcdcdc" stroke="#5a5a5a" stroke-width="0.9"/><rect x="0.9" y="8.8" width="5.6" height="1.8" fill="#444"/><rect x="1.4" y="1.9" width="4.6" height="6.6" fill="#5ab0ea"/></svg>
<div class="t " style="left:568.9px;top:40.90px;font-size:8.2px;letter-spacing:-0.247px;color:#111;">Shown in @layout/activity_donate</div>
<svg style="left:557.5999999999999px;top:55.800000000000004px" width="6.4" height="5" viewBox="0 0 6.4 5"><path d="M0 0H6.4L3.2 5Z" fill="#737373"/></svg>
<svg style="left:570.4px;top:52.5px" width="11.2" height="11.2" viewBox="0 0 10.6 10.6"><rect x="0.5" y="0.5" width="9.6" height="9.6" rx="1" fill="#fff" stroke="#9a9a9a" stroke-width="0.9"/><path d="M3.3 2.3V8.3M7.3 2.3V8.3M3.3 5.3H7.3" stroke="#777" stroke-width="0.8" fill="none"/><path d="M0.5 5.3H3.3M7.3 5.3H10.1" stroke="#bbb" stroke-width="0.7"/></svg>
<div class="t " style="left:582.5px;top:54.00px;font-size:8.2px;letter-spacing:-0.26px;color:#111;">RelativeLayout</div>
<div class="a" style="left:541.6px;top:65.6px;width:244.6px;height:12px;background:#d4d4d4;"></div>
<svg style="left:584.4px;top:66.5px" width="10.8" height="9.8" viewBox="0 0 10.6 9.6"><rect x="0.5" y="0.5" width="9.6" height="8.6" rx="1.8" fill="#fff" stroke="#7d7d7d" stroke-width="0.9"/><text x="5.3" y="7" font-size="6.6" stroke="#333" stroke-width="0.2" text-anchor="middle" fill="#333" font-family='"Liberation Sans",sans-serif'>Ab</text></svg>
<div class="t" style="left:596.4px;top:67.1px;font-size:8.2px;color:#111;letter-spacing:-0.02px"><b style="letter-spacing:0.16px">donateTitle</b> (TextView) - @string/donateTitle</div>
<div class="t" style="left:788.8px;top:9.3px;font-size:10.8px;font-style:italic;font-weight:bold;color:#3d7ea6;font-family:'Liberation Sans',sans-serif;line-height:10px;letter-spacing:0;-webkit-text-stroke:0">m</div>
<div class="t" style="left:797.9px;top:22.6px;font-size:7.6px;color:#111;transform-origin:0 0;transform:rotate(90deg);letter-spacing:-0.21px">Maven Projects</div>
<svg style="left:788.7px;top:92.7px" width="9.4" height="9.4" viewBox="0 0 10 10"><path d="M5 0.8A4.2 4.2 0 1 0 9.2 5.4" fill="none" stroke="#7cc03a" stroke-width="1.35"/><path d="M6.4 1A4.3 4.3 0 0 1 9 3.8" fill="none" stroke="#2f8f35" stroke-width="1.35"/><circle cx="5" cy="5" r="1.9" fill="#1f8f3c"/></svg>
<div class="t" style="left:797.9px;top:105px;font-size:7.6px;color:#111;transform-origin:0 0;transform:rotate(90deg);letter-spacing:-0.2px">Gradle</div>
<div class="t " style="left:544.5px;top:254.00px;font-size:8.2px;letter-spacing:-0.37px;color:#111;">Properties</div>
<div class="t" style="left:728px;top:253.6px;font-size:12.5px;color:#2f86c6;font-family:'Liberation Sans',sans-serif;line-height:10px;-webkit-text-stroke:0.6px #2f86c6">?</div>
<svg style="left:747px;top:253.6px" width="10.6" height="10.6" viewBox="0 0 10 10"><path d="M2 3.4H6A2.7 2.7 0 0 1 6 8.8H1.6" fill="none" stroke="#7a3fb0" stroke-width="1.5"/><path d="M0.2 3.4L3.4 0.8V6Z" fill="#7a3fb0"/></svg>
<svg style="left:767.2px;top:254.2px" width="10.4" height="10" viewBox="0 0 10.4 10"><path d="M0.2 0.4H10.2L6.4 4.8V9.4L4 7.8V4.8Z" fill="#2f86c6"/></svg>
<div class="a" style="left:541.6px;top:268.6px;width:244.6px;height:269.2px;overflow:hidden"><div class="a" style="left:-541.6px;top:-268.6px;width:800px;height:553px">
<div class="a" style="left:663.3px;top:268px;width:0.8px;height:271px;background:#efefef;"></div>
<div class="a" style="left:541.6px;top:277.83000000000004px;width:244.6px;height:0.8px;background:#f3f3f3;"></div>
<div class="t " style="left:555.6px;top:265.23px;font-size:8.2px;letter-spacing:-0.19px;color:#111;">singleLine</div>
<div class="a" style="left:668.6px;top:266.93px;width:8px;height:8px;border:0.9px solid #bdbdbd;border-radius:2px;background:#fdfdfd"></div>
<div class="a" style="left:541.6px;top:293.1px;width:244.6px;height:0.8px;background:#f3f3f3;"></div>
<div class="t " style="left:555.6px;top:280.50px;font-size:8.2px;letter-spacing:-0.19px;color:#111;">stateListAnimator</div>
<div class="a" style="left:541.6px;top:308.37px;width:244.6px;height:0.8px;background:#f3f3f3;"></div>
<div class="t b" style="left:555.6px;top:295.77px;font-size:8.2px;letter-spacing:0.02px;color:#0f28a0;">text</div>
<div class="t " style="left:666px;top:295.77px;font-size:8.2px;letter-spacing:-0.13px;color:#111;">@string/donateTitle</div>
<div class="a" style="left:541.6px;top:323.64000000000004px;width:244.6px;height:0.8px;background:#f3f3f3;"></div>
<div class="t " style="left:555.6px;top:311.04px;font-size:8.2px;letter-spacing:-0.19px;color:#111;">textAlignment</div>
<div class="a" style="left:541.6px;top:338.91px;width:244.6px;height:0.8px;background:#f3f3f3;"></div>
<div class="t " style="left:555.6px;top:326.31px;font-size:8.2px;letter-spacing:-0.19px;color:#1d3cb0;">textAppearance</div>
<div class="t " style="left:666px;top:326.31px;font-size:8.2px;letter-spacing:-0.13px;color:#111;">?android:attr/textAppearance</div>
<div class="a" style="left:541.6px;top:354.18px;width:244.6px;height:0.8px;background:#f3f3f3;"></div>
<div class="t b" style="left:555.6px;top:341.58px;font-size:8.2px;letter-spacing:0.02px;color:#111;">textColor</div>
<div class="a" style="left:541.6px;top:369.45px;width:244.6px;height:0.8px;background:#f3f3f3;"></div>
<div class="t " style="left:555.6px;top:356.85px;font-size:8.2px;letter-spacing:-0.19px;color:#111;">textColorHighlight</div>
<div class="a" style="left:541.6px;top:384.72px;width:244.6px;height:0.8px;background:#f3f3f3;"></div>
<div class="t " style="left:555.6px;top:372.12px;font-size:8.2px;letter-spacing:-0.19px;color:#111;">textColorHint</div>
<div class="a" style="left:541.6px;top:399.99px;width:244.6px;height:0.8px;background:#f3f3f3;"></div>
<div class="t " style="left:555.6px;top:387.39px;font-size:8.2px;letter-spacing:-0.19px;color:#111;">textColorLink</div>
<div class="a" style="left:541.6px;top:415.26000000000005px;width:244.6px;height:0.8px;background:#f3f3f3;"></div>
<div class="t " style="left:555.6px;top:402.66px;font-size:8.2px;letter-spacing:-0.19px;color:#111;">textIsSelectable</div>
<div class="a" style="left:668.6px;top:404.36px;width:8px;height:8px;border:0.9px solid #bdbdbd;border-radius:2px;background:#fdfdfd"></div>
<div class="a" style="left:541.6px;top:430.53000000000003px;width:244.6px;height:0.8px;background:#f3f3f3;"></div>
<div class="t " style="left:555.6px;top:417.93px;font-size:8.2px;letter-spacing:-0.19px;color:#111;">textSize</div>
<div class="a" style="left:541.6px;top:445.8px;width:244.6px;height:0.8px;background:#f3f3f3;"></div>
<div class="t b" style="left:555.6px;top:433.20px;font-size:8.2px;letter-spacing:0.02px;color:#111;">textStyle</div>
<div class="t " style="left:666px;top:433.20px;font-size:8.2px;letter-spacing:-0.13px;color:#111;">[]</div>
<svg style="left:545.4px;top:435.50px" width="5" height="6.4" viewBox="0 0 5 6.4"><path d="M0 0V6.4L5 3.2Z" fill="#737373"/></svg>
<div class="a" style="left:541.6px;top:461.07px;width:244.6px;height:0.8px;background:#f3f3f3;"></div>
<div class="t " style="left:555.6px;top:448.47px;font-size:8.2px;letter-spacing:-0.19px;color:#111;">theme</div>
<div class="a" style="left:541.6px;top:476.34000000000003px;width:244.6px;height:0.8px;background:#f3f3f3;"></div>
<div class="t " style="left:555.6px;top:463.74px;font-size:8.2px;letter-spacing:-0.19px;color:#111;">transitionName</div>
<div class="a" style="left:541.6px;top:491.61px;width:244.6px;height:0.8px;background:#f3f3f3;"></div>
<div class="t " style="left:555.6px;top:479.01px;font-size:8.2px;letter-spacing:-0.19px;color:#111;">translationZ</div>
<div class="a" style="left:541.6px;top:506.88000000000005px;width:244.6px;height:0.8px;background:#f3f3f3;"></div>
<div class="t b" style="left:555.6px;top:494.28px;font-size:8.2px;letter-spacing:0.02px;color:#111;">typeface</div>
<div class="a" style="left:541.6px;top:522.15px;width:244.6px;height:0.8px;background:#f3f3f3;"></div>
<div class="t " style="left:555.6px;top:509.55px;font-size:8.2px;letter-spacing:-0.19px;color:#111;">visibility</div>
<div class="a" style="left:541.6px;top:537.42px;width:244.6px;height:0.8px;background:#f3f3f3;"></div>
<div class="t " style="left:555.6px;top:524.82px;font-size:8.2px;letter-spacing:-0.19px;color:#111;">width</div>
</div></div>
<div class="a" style="left:0px;top:537px;width:541px;height:3.4px;background:#ffffff;"></div>
<div class="a" style="left:0px;top:539.7px;width:786px;height:2.1px;background:#c2c2c2;"></div>
<div class="a" style="left:0px;top:541.8px;width:786px;height:11.2px;background:#ececec;"></div>
<div class="a" style="left:9px;top:540.6px;width:36.6px;height:12.6px;background:#ffffff;border-left:1px solid #b5b5b5;border-right:1px solid #b5b5b5;"></div>
<div class="a" style="left:45.6px;top:541.2px;width:34.4px;height:12px;background:#d1d1d1;border-right:1px solid #b0b0b0;"></div>
<div class="t " style="left:16px;top:542.60px;font-size:7.9px;letter-spacing:-0.38px;color:#111;">Design</div>
<div class="t " style="left:55.6px;top:542.60px;font-size:7.9px;letter-spacing:0.1px;color:#222;">Text</div>
</div>
</body></html>
